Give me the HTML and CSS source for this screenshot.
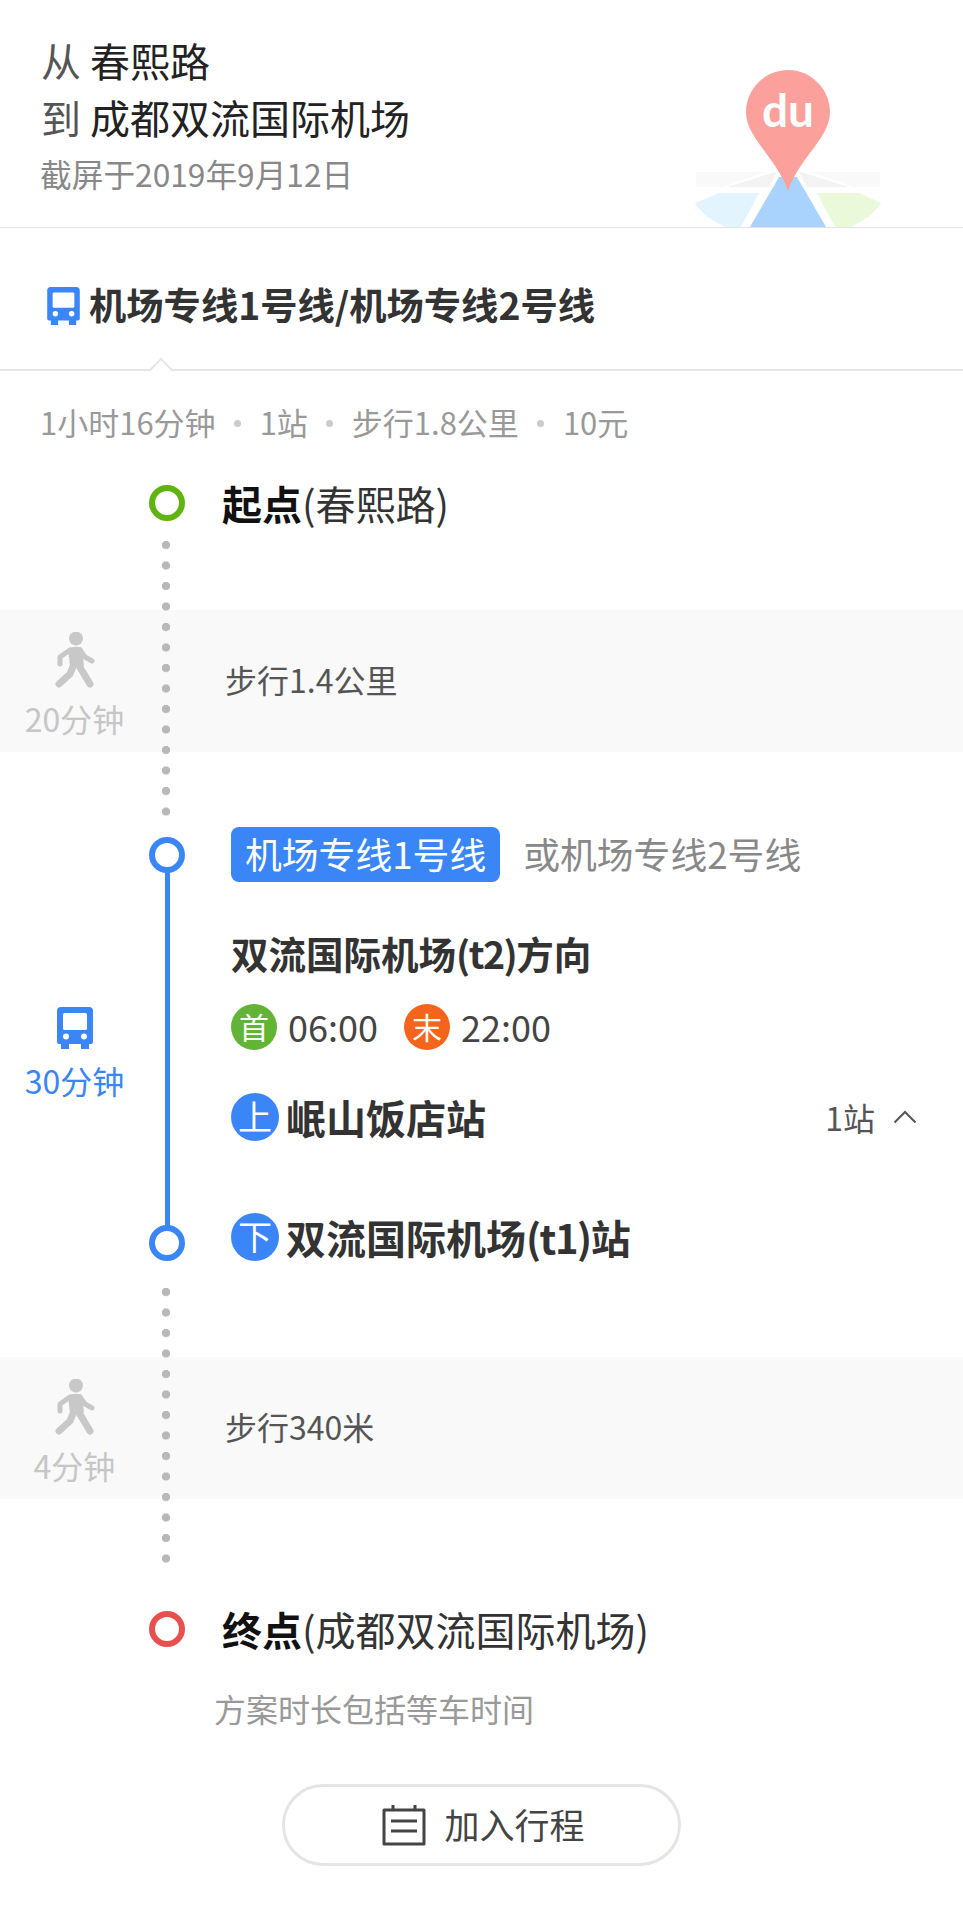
FILE: index.html
```html
<!DOCTYPE html>
<html lang="zh-CN">
<head>
    <meta charset="UTF-8">
    <meta name="viewport" content="width=device-width, initial-scale=1.0">
    <title>公交路线</title>
    <link rel="stylesheet" href="styles.css">
</head>
<body>
    <svg class="sprites" width="0" height="0">
        <symbol id="bus" viewBox="0 0 36 42">
            <path d="M4 0h28a4 4 0 0 1 4 4v31a2 2 0 0 1-2 2h-2v5h-8v-5H12v5H4v-5H2a2 2 0 0 1-2-2V4a4 4 0 0 1 4-4z" fill="currentColor"/>
            <rect x="6" y="6" width="24" height="17" rx="1.5" fill="#fff"/>
            <circle cx="9" cy="29.500" r="3" fill="#fff"/>
            <circle cx="27" cy="29.500" r="3" fill="#fff"/>
        </symbol>
        <symbol id="walker" viewBox="0 0 40 56">
            <circle cx="21" cy="6.500" r="7" fill="currentColor"/>
            <path d="M13 17q7-4 14-1l2 18H15z" fill="currentColor"/>
            <path d="M25 18l5 7 7 4" fill="none" stroke="currentColor" stroke-width="5" stroke-linecap="round" stroke-linejoin="round"/>
            <path d="M15 18L5 25l0 7" fill="none" stroke="currentColor" stroke-width="5" stroke-linecap="round" stroke-linejoin="round"/>
            <path d="M23 32l12 20" fill="none" stroke="currentColor" stroke-width="7" stroke-linecap="round"/>
            <path d="M19 32l-4 10-11 10" fill="none" stroke="currentColor" stroke-width="7" stroke-linecap="round" stroke-linejoin="round"/>
        </symbol>
    </svg>

    <header class="header">
        <div class="header-text">
            <div class="place"><span class="place-label">从</span> 春熙路</div>
            <div class="place"><span class="place-label">到</span> 成都双流国际机场</div>
            <div class="shot-date">截屏于2019年9月12日</div>
        </div>
        <svg class="logo" viewBox="0 0 190 157" width="190" height="157">
            <path d="M3 102h70L30 117H3zM117 102h70v15h-27z" fill="#f9f9f9"/>
            <path d="M34 117l48-15h2l-8 15zM114 117l-8-15h2l48 15z" fill="#f3f3f3"/>
            <path d="M26 123h40L48 157H33C20 152 8 143 2 133z" fill="#e2f4fd"/>
            <path d="M124 123h42l22 10c-6 10-18 19-31 24h-15z" fill="#e9f9d9"/>
            <path d="M86 107h18l29 50H57z" fill="#a9d3fd"/>
            <path d="M95 0c23 0 42 19 42 42 0 26-31 46-42 79C84 88 53 68 53 42 53 19 72 0 95 0z" fill="#fba09a"/>
            <text class="logo-text" x="95" y="57" text-anchor="middle">du</text>
        </svg>
    </header>

    <div class="route-tab">
        <svg class="tab-bus"><use href="#bus"/></svg>
        <span class="tab-name">机场专线1号线/机场专线2号线</span>
        <span class="tab-caret"></span>
    </div>

    <div class="summary">
        <span>1小时16分钟</span><i class="sep"></i>
        <span>1站</span><i class="sep"></i>
        <span>步行1.8公里</span><i class="sep"></i>
        <span>10元</span>
    </div>

    <div class="timeline">
        <div class="stop-row stop-start">
            <span class="node node-green"></span>
            <div class="stop-name"><b>起点</b>(春熙路)</div>
        </div>

        <section class="walk walk-first">
            <div class="dots"></div>
            <div class="walk-band">
                <div class="leg-side">
                    <svg class="walker"><use href="#walker"/></svg>
                    <span>20分钟</span>
                </div>
                <div class="walk-text">步行1.4公里</div>
            </div>
        </section>

        <section class="transit">
            <div class="leg-side leg-side-blue">
                <svg class="side-bus"><use href="#bus"/></svg>
                <span>30分钟</span>
            </div>
            <div class="rail">
                <span class="node node-blue"></span>
                <span class="rail-line"></span>
                <span class="node node-blue"></span>
            </div>
            <div class="transit-body">
                <div class="line-row">
                    <span class="line-tag">机场专线1号线</span>
                    <span class="line-alt">或机场专线2号线</span>
                </div>
                <div class="direction">双流国际机场<span class="tight">(t2)</span>方向</div>
                <div class="times">
                    <span class="badge badge-green">首</span><span class="time">06:00</span>
                    <span class="badge badge-orange">末</span><span class="time">22:00</span>
                </div>
                <div class="station board">
                    <span class="badge badge-blue">上</span><span class="station-name">岷山饭店站</span>
                    <span class="station-count">1站
                        <svg class="chevron" viewBox="0 0 24 14" width="24" height="14"><path d="M1.500 12.500L12 2l10.500 10.500" fill="none" stroke="#555" stroke-width="2"/></svg>
                    </span>
                </div>
                <div class="station alight">
                    <span class="badge badge-blue">下</span><span class="station-name">双流国际机场<span class="tight">(t1)</span>站</span>
                </div>
            </div>
        </section>

        <section class="walk walk-last">
            <div class="dots"></div>
            <div class="walk-band">
                <div class="leg-side">
                    <svg class="walker"><use href="#walker"/></svg>
                    <span>4分钟</span>
                </div>
                <div class="walk-text">步行340米</div>
            </div>
        </section>

        <div class="stop-row">
            <span class="node node-red"></span>
            <div class="stop-name"><b>终点</b>(成都双流国际机场)</div>
        </div>
    </div>

    <p class="hint">方案时长包括等车时间</p>

    <button class="trip-btn">
        <svg class="cal" viewBox="0 0 44 42" width="44" height="42">
            <path d="M2 6h40v34H2z" fill="none" stroke="#444" stroke-width="3" stroke-linejoin="round"/>
            <path d="M11 1v6M33 1v6M9 17h26M9 27h26" fill="none" stroke="#444" stroke-width="3"/>
        </svg>
        <span class="trip-label">加入行程</span>
    </button>
</body>
</html>
```

FILE: styles.css
```css
* {
    margin: 0;
    padding: 0;
    box-sizing: border-box;
}

body {
    font-family: 'Noto Sans CJK SC', sans-serif;
    background-color: #fff;
    color: #333;
    width: 963px;
    height: 1920px;
    overflow: hidden;
}

.sprites {
    position: absolute;
}

.header {
    height: 228px;
    padding: 32px 80px 0 41px;
    display: flex;
    justify-content: space-between;
    align-items: flex-end;
    border-bottom: 1px solid #e3e3e3;
}

.header-text {
    align-self: flex-start;
}

.place {
    font-size: 40px;
    line-height: 57px;
    color: #222;
}

.place-label {
    color: #555;
}

.shot-date {
    margin: -1px 0 0 -1px;
    font-size: 31.700px;
    line-height: 57px;
    color: #888;
}

.logo {
    display: block;
    flex: none;
}

.logo-text {
    font-family: 'Lato', sans-serif;
    font-weight: 700;
    font-size: 46px;
    fill: #fff;
}

.route-tab {
    position: relative;
    height: 143px;
    padding: 14px 0 0 47px;
    display: flex;
    align-items: center;
    gap: 9px;
    border-bottom: 2px solid #e5e5e5;
}

.tab-bus {
    width: 33px;
    height: 38px;
    color: #3b86f7;
    flex: none;
}

.tab-name {
    padding-bottom: 4px;
    font-size: 37.300px;
    font-weight: 700;
    color: #333;
}

.tab-caret {
    position: absolute;
    left: 153px;
    bottom: -8px;
    width: 16px;
    height: 16px;
    background: #fff;
    border-top: 2px solid #e5e5e5;
    border-left: 2px solid #e5e5e5;
    transform: rotate(45deg);
}

.summary {
    padding: 27px 0 0 40px;
    height: 75px;
    display: flex;
    align-items: center;
    gap: 18.500px;
    font-size: 31px;
    line-height: 44px;
    color: #999;
}

.sep {
    width: 7px;
    height: 7px;
    margin-top: 3px;
    border-radius: 50%;
    background: #ccc;
}

.stop-row {
    display: grid;
    grid-template-columns: 149px 36px 1fr;
    height: 36px;
    align-items: center;
}

.stop-row .node {
    grid-column: 2;
}

.stop-start {
    margin-top: 39px;
}

.stop-name {
    padding-left: 37px;
    font-size: 40px;
    line-height: 36px;
    color: #333;
    white-space: nowrap;
}

.stop-name b {
    color: #111;
}

.node {
    display: block;
    width: 36px;
    height: 36px;
    border-radius: 50%;
    border: 6px solid;
    background: #fff;
    flex: none;
}

.node-green { border-color: #5fb40f; }
.node-blue { border-color: #3b86f7; }
.node-red { border-color: #e8504f; }

.walk {
    position: relative;
}

.walk-first {
    padding: 89px 0 85px;
}

.walk-last {
    padding: 96px 0 112px;
}

.dots {
    position: absolute;
    left: 162px;
    width: 8px;
    height: 278px;
    background: radial-gradient(circle at 4px 4px, #b8b8b8 3.800px, transparent 4.500px) 0 0 / 8px 20.500px repeat-y;
    z-index: 1;
}

.walk-first .dots {
    top: 20px;
}

.walk-last .dots {
    top: 27px;
}

.walk-band {
    height: 142px;
    background: #f9f9f9;
    display: grid;
    grid-template-columns: 149px 1fr;
    align-items: center;
}

.walk-text {
    padding: 0 0 4px 76px;
    font-size: 32px;
    color: #555;
}

.leg-side {
    padding-top: 10px;
    display: flex;
    flex-direction: column;
    align-items: center;
    font-size: 32px;
    line-height: 44px;
    color: #c6c6c6;
}

.walker {
    width: 40px;
    height: 56px;
    margin-bottom: 8px;
    color: #c8c8c8;
}

.leg-side-blue {
    color: #3b86f7;
    justify-content: center;
}

.side-bus {
    width: 36px;
    height: 42px;
    margin-bottom: 9px;
}

.transit {
    display: grid;
    grid-template-columns: 149px 36px 1fr;
}

.rail {
    display: flex;
    flex-direction: column;
    align-items: center;
}

.rail-line {
    flex: 1;
    width: 5px;
    margin: -1px 0;
    background: #3b86f7;
}

.transit-body {
    margin-top: -10px;
    padding: 0 0 0 46px;
    display: flex;
    flex-direction: column;
    color: #333;
}

.line-row {
    display: flex;
    align-items: center;
    gap: 23px;
    height: 55px;
}

.line-tag {
    height: 55px;
    padding: 0 14px;
    border-radius: 8px;
    background: #3b86f7;
    color: #fff;
    font-size: 36.800px;
    line-height: 52px;
}

.line-alt {
    padding-bottom: 3px;
    font-size: 36.800px;
    color: #888;
}

.direction {
    margin-top: 46px;
    font-size: 37.500px;
    font-weight: 700;
    line-height: 50px;
}

.tight {
    letter-spacing: -1.500px;
}

.times {
    margin-top: 26px;
    display: flex;
    align-items: center;
    height: 46px;
}

.badge {
    flex: none;
    width: 46px;
    height: 46px;
    border-radius: 50%;
    color: #fff;
    font-size: 30px;
    line-height: 44px;
    text-align: center;
}

.badge-green { background: #62b437; }
.badge-orange { background: #f4651b; }
.badge-blue {
    background: #3b86f7;
    width: 48px;
    height: 48px;
    font-size: 34px;
    line-height: 46px;
}

.time {
    margin: 0 26px 0 11px;
    padding-bottom: 2px;
    font-size: 36px;
    color: #444;
}

.station {
    display: flex;
    align-items: center;
    height: 48px;
}

.board {
    margin-top: 43px;
    padding-right: 46px;
}

.alight {
    margin-top: 72px;
}

.station-name {
    margin-left: 7px;
    font-size: 40px;
    font-weight: 700;
    color: #333;
    white-space: nowrap;
}

.station-count {
    margin-left: auto;
    display: flex;
    align-items: center;
    gap: 18px;
    font-size: 32px;
    color: #555;
}

.hint {
    margin: 38px 0 0 214px;
    font-size: 32px;
    line-height: 46px;
    color: #999;
}

.trip-btn {
    display: flex;
    align-items: center;
    justify-content: center;
    gap: 18px;
    width: 399px;
    height: 82px;
    margin: 53px 0 0 282px;
    padding-left: 4px;
    background: #fff;
    border: 3px solid #e4e6e4;
    border-radius: 41px;
    font-family: inherit;
    font-size: 35px;
    color: #444;
}

.trip-label {
    padding-bottom: 3px;
}

.cal {
    flex: none;
}
```
